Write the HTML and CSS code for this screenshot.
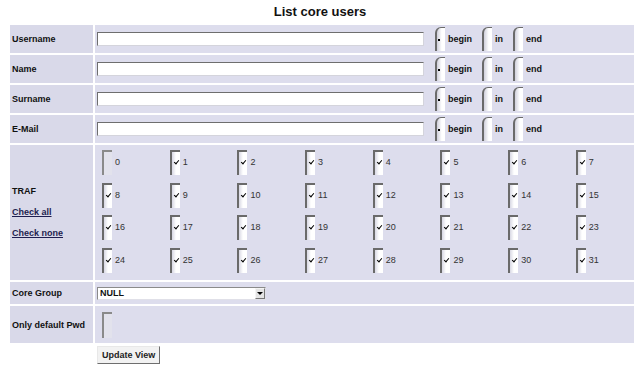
FILE: index.html
```html
<!DOCTYPE html>
<html lang="en">
<head>
    <meta charset="UTF-8">
    <title>List core users</title>
    <link rel="stylesheet" href="styles.css">
</head>
<body>

<h1 class="title">List core users</h1>

<form class="filter">
    <table class="grid">
        <colgroup>
            <col class="col-lbl">
            <col class="col-fld">
        </colgroup>
        <tr class="row-text">
            <td class="lbl">Username</td>
            <td class="fld">
                <div class="line">
                    <input type="text" class="txt">
                    <label class="opt"><input type="radio" name="m_user" checked><span class="bracket"></span>begin</label>
                    <label class="opt"><input type="radio" name="m_user"><span class="bracket"></span>in</label>
                    <label class="opt"><input type="radio" name="m_user"><span class="bracket"></span>end</label>
                </div>
            </td>
        </tr>
        <tr class="row-text">
            <td class="lbl">Name</td>
            <td class="fld">
                <div class="line">
                    <input type="text" class="txt">
                    <label class="opt"><input type="radio" name="m_name" checked><span class="bracket"></span>begin</label>
                    <label class="opt"><input type="radio" name="m_name"><span class="bracket"></span>in</label>
                    <label class="opt"><input type="radio" name="m_name"><span class="bracket"></span>end</label>
                </div>
            </td>
        </tr>
        <tr class="row-text">
            <td class="lbl">Surname</td>
            <td class="fld">
                <div class="line">
                    <input type="text" class="txt">
                    <label class="opt"><input type="radio" name="m_sur" checked><span class="bracket"></span>begin</label>
                    <label class="opt"><input type="radio" name="m_sur"><span class="bracket"></span>in</label>
                    <label class="opt"><input type="radio" name="m_sur"><span class="bracket"></span>end</label>
                </div>
            </td>
        </tr>
        <tr class="row-text">
            <td class="lbl">E-Mail</td>
            <td class="fld">
                <div class="line">
                    <input type="text" class="txt">
                    <label class="opt"><input type="radio" name="m_mail" checked><span class="bracket"></span>begin</label>
                    <label class="opt"><input type="radio" name="m_mail"><span class="bracket"></span>in</label>
                    <label class="opt"><input type="radio" name="m_mail"><span class="bracket"></span>end</label>
                </div>
            </td>
        </tr>
        <tr>
            <td class="lbl">
                <div class="traf-lbl">
                    <div>TRAF</div>
                    <a href="#" class="lnk">Check all</a>
                    <a href="#" class="lnk">Check none</a>
                </div>
            </td>
            <td class="fld">
                <div class="traf" id="traf"></div>
            </td>
        </tr>
        <tr class="row-group">
            <td class="lbl">Core Group</td>
            <td class="fld">
                <div class="line">
                    <span class="sel-wrap">
                        <select class="sel">
                            <option>NULL</option>
                        </select>
                        <span class="sel-btn"></span>
                    </span>
                </div>
            </td>
        </tr>
        <tr class="row-pwd">
            <td class="lbl">Only default Pwd</td>
            <td class="fld">
                <div class="line pwd">
                    <label class="cb"><input type="checkbox"><span class="box"></span></label>
                </div>
            </td>
        </tr>
    </table>
    <button type="button" class="btn">Update View</button>
</form>

<script>
    // casillas TRAF 0..31, todas marcadas menos la 0
    const traf = document.getElementById("traf");
    for (let i = 0; i < 32; i++) {
        const lbl = document.createElement("label");
        lbl.className = "cb";
        const chk = document.createElement("input");
        chk.type = "checkbox";
        chk.checked = i !== 0;
        const box = document.createElement("span");
        box.className = "box";
        lbl.appendChild(chk);
        lbl.appendChild(box);
        lbl.appendChild(document.createTextNode(i));
        traf.appendChild(lbl);
    }

    document.querySelectorAll(".lnk").forEach((a, n) => {
        a.addEventListener("click", e => {
            e.preventDefault();
            traf.querySelectorAll("input").forEach(c => c.checked = n === 0);
        });
    });
</script>

</body>
</html>
```

FILE: styles.css
```css
body {
    margin: 0;
    background-color: #fff;
    font-family: "Liberation Sans", Arial, sans-serif;
    font-size: 9px;
    color: #111;
}

.title {
    margin: 0;
    padding: 3px 0 3px 0;
    font-size: 13px;
    line-height: 17px;
    text-align: center;
}

.filter {
    margin: 0 0 0 8px;
}

.grid {
    table-layout: fixed;
    width: 628px;
    border-spacing: 2px;
    background-color: #fff;
}

.col-lbl {
    width: 83px;
}

.col-fld {
    width: 539px;
}

.grid td {
    padding: 0;
}

.lbl {
    padding-left: 2px !important;
    background-color: #d9d9e9;
    font-weight: bold;
    white-space: nowrap;
    vertical-align: middle;
}

.fld {
    background-color: #dddded;
    vertical-align: middle;
}

.row-text td {
    height: 28px;
}

.row-group td {
    height: 22px;
}

.row-pwd td {
    height: 37px;
}

.line {
    display: flex;
    align-items: center;
    padding-left: 2px;
}

.txt {
    box-sizing: border-box;
    width: 327px;
    height: 14px;
    margin: 0 11px 0 0;
    padding: 0 2px;
    background-color: #fff;
    border: 1px solid #d4d4dc;
    border-top-color: #6e6e6e;
    border-left-color: #6e6e6e;
    font: 9px "Liberation Sans", Arial, sans-serif;
}

.opt {
    display: inline-flex;
    align-items: center;
    gap: 3px;
    margin-right: 10px;
    font-weight: bold;
    cursor: pointer;
}

.opt input,
.cb input {
    display: none;
}

.bracket {
    position: relative;
    box-sizing: border-box;
    width: 10px;
    height: 24px;
    border-left: 2px solid #6a6a6a;
    border-top: 1px solid #6a6a6a;
    border-top-left-radius: 6px;
    background: linear-gradient(to right, #d0d0dc, #fff 60%);
}

.opt input:checked + .bracket::after {
    content: "";
    position: absolute;
    left: 1px;
    top: 11px;
    width: 2px;
    height: 2px;
    background-color: #000;
}

.traf-lbl {
    line-height: 21px;
}

.lnk {
    display: block;
    color: #1e1e50;
    text-decoration: underline;
}

.traf {
    display: grid;
    grid-template-columns: repeat(8, 67.7px);
    grid-auto-rows: 32.5px;
    padding: 5px 0 0 7px;
    height: 130px;
}

.cb {
    display: inline-flex;
    align-items: flex-start;
    gap: 3px;
    color: #333;
    line-height: 24px;
    cursor: pointer;
}

.box {
    position: relative;
    box-sizing: border-box;
    width: 10px;
    height: 25px;
    border-left: 2px solid #6a6a6a;
    border-top: 2px solid #6a6a6a;
    background: linear-gradient(to right, #d8d8e4, #fff 50%);
}

.cb input:not(:checked) + .box {
    background: #e2e2ec;
    border-color: #8a8a8a;
}

.cb input:checked + .box::after {
    content: "";
    position: absolute;
    left: 2px;
    top: 8px;
    width: 4px;
    height: 2px;
    border-left: 1.5px solid #000;
    border-bottom: 1.5px solid #000;
    transform: rotate(-50deg);
}

.pwd {
    padding-left: 7px;
}

.pwd .box {
    height: 26px;
}

.sel-wrap {
    position: relative;
    display: inline-block;
}

.sel {
    appearance: none;
    box-sizing: border-box;
    width: 169px;
    height: 13px;
    margin: 0;
    padding: 0 0 0 2px;
    background-color: #fff;
    border: 1px solid #e0e0e8;
    border-top-color: #8a8a8a;
    border-left-color: #8a8a8a;
    border-radius: 0;
    font: bold 9px "Liberation Sans", Arial, sans-serif;
    color: #111;
}

.sel-btn {
    position: absolute;
    right: 1px;
    top: 1px;
    box-sizing: border-box;
    width: 10px;
    height: 11px;
    background-color: #e4e4e4;
    border: 1px solid #777;
    border-top-color: #f4f4f4;
    border-left-color: #f4f4f4;
    pointer-events: none;
}

.sel-btn::after {
    content: "";
    position: absolute;
    left: 1px;
    top: 3px;
    border-left: 3px solid transparent;
    border-right: 3px solid transparent;
    border-top: 3px solid #000;
}

.btn {
    display: block;
    height: 18px;
    margin: 1px 0 0 89px;
    padding: 0 4px;
    background-color: #f2f2f2;
    border: 1px solid #6e6e6e;
    border-top-color: #e8e8e8;
    border-left-color: #e8e8e8;
    font: bold 9px "Liberation Sans", Arial, sans-serif;
    color: #222;
    cursor: pointer;
}

.btn:hover {
    background-color: #e6e6e6;
}
```
